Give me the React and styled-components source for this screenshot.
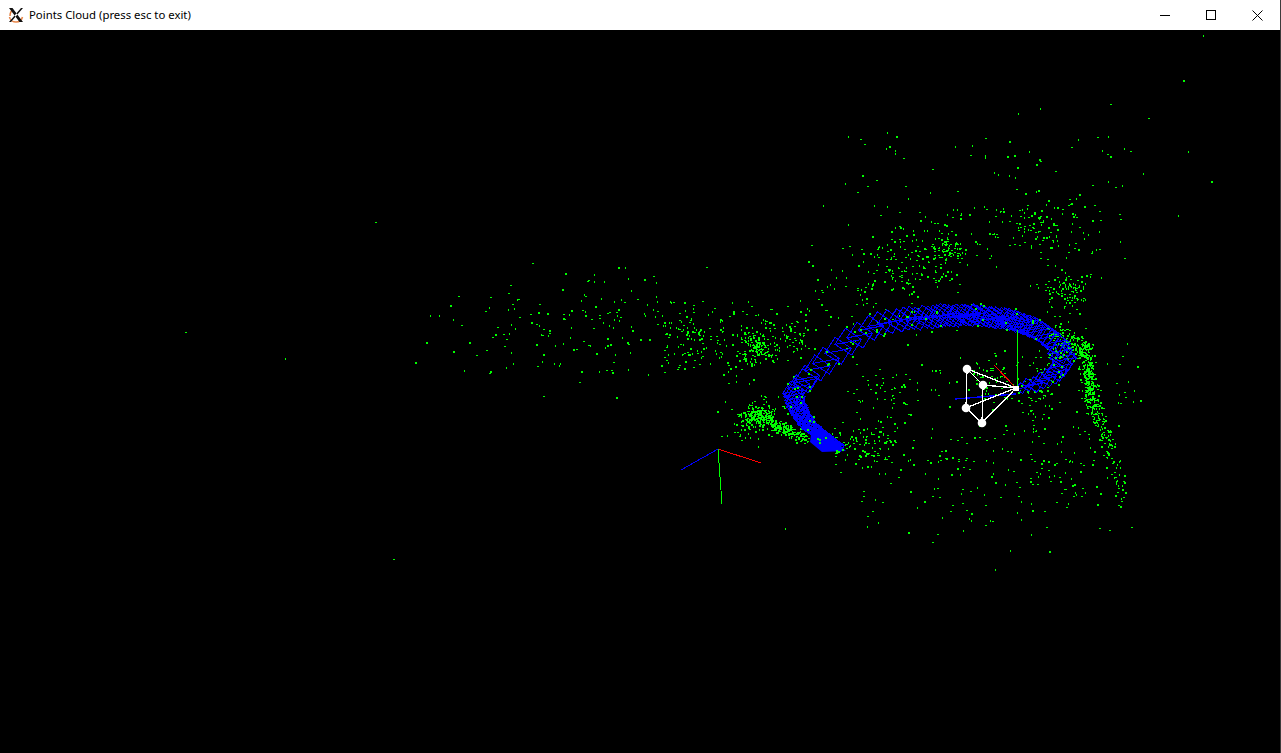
import React, { useMemo } from "react"
import styled, { createGlobalStyle } from "styled-components";

const GlobalStyle = createGlobalStyle`
    html, body { margin: 0; height: 100%; background: #000; overflow: hidden; }
`;

const Window = styled.div`
    display: flex;
    flex-direction: column;
    height: 100vh;
    border-right: 1px solid #3c3c3c;
    box-sizing: border-box;
`;

const TitleBar = styled.div`
    height: 30px;
    flex: none;
    display: flex;
    align-items: center;
    background: #fff;
    font-family: "Noto Sans", "Liberation Sans", sans-serif;
`;

const AppIcon = styled.svg`
    width: 16px;
    height: 16px;
    margin-left: 8px;
    flex: none;
`;

const Title = styled.div`
    flex: 1;
    margin-left: 5px;
    padding-bottom: 1px;
    font-size: 11.35px;
    color: #000;
    white-space: nowrap;
`;

const ControlButton = styled.div`
    width: 46px;
    height: 30px;
    display: flex;
    align-items: center;
    justify-content: center;
`;

const Scene = styled.svg`
    flex: 1;
    min-height: 0;
    display: block;
    width: 100%;
    background: #000;
`;

// small seeded generator so the cloud comes out the same on every load
function makeRandom(seed) {
    let s = seed
    return () => {
        s = (s + 0x6d2b79f5) | 0
        let t = Math.imul(s ^ (s >>> 15), 1 | s)
        t = (t + Math.imul(t ^ (t >>> 7), 61 | t)) ^ t
        return ((t ^ (t >>> 14)) >>> 0) / 4294967296
    }
}

// [cx, cy, sx, sy, count]
const BLOBS = [
    [945, 250, 9, 8, 60],
    [945, 250, 26, 22, 70],
    [1040, 225, 28, 14, 100],
    [1068, 292, 11, 12, 90],
    [1062, 265, 25, 30, 30],
    [900, 262, 22, 20, 100],
    [880, 300, 45, 22, 45],
    [757, 347, 5, 5, 50],
    [757, 347, 13, 10, 90],
    [795, 335, 7, 10, 40],
    [690, 335, 17, 15, 90],
    [735, 345, 36, 24, 110],
    [530, 325, 48, 24, 50],
    [615, 320, 32, 28, 50],
    [840, 285, 20, 30, 35],
    [755, 415, 8, 5, 140],
    [757, 420, 15, 10, 80],
    [868, 443, 20, 13, 110],
    [900, 392, 26, 13, 60],
    [1050, 465, 22, 28, 30],
    [985, 378, 16, 14, 60],
    [1035, 392, 14, 18, 60],
    [1122, 375, 10, 22, 14],
]

// even scatter: [x, y, width, height, count]
const SCATTERS = [
    [840, 130, 310, 130, 95],
    [860, 450, 270, 85, 125],
    [930, 425, 190, 40, 40],
    [480, 295, 200, 80, 40],
]

// dense streaks of points: [x1, y1, x2, y2, spread, count]
const STREAKS = [
    [768, 420, 805, 438, 3, 170],
    [1050, 332, 1085, 348, 5, 130],
    [1085, 345, 1092, 405, 4, 240],
    [1090, 400, 1108, 440, 4, 90],
    [1105, 440, 1122, 498, 4, 35],
    [1040, 360, 1070, 345, 7, 50],
]

const LONERS = [
    [375, 222], [185, 332], [285, 358], [415, 362], [393, 559], [1203, 35], [1183, 80],
    [1211, 181], [1178, 215], [1188, 151], [1148, 118], [1040, 108], [1018, 113], [1110, 104],
    [995, 569], [1010, 550], [932, 542], [785, 528], [706, 267], [628, 278], [565, 273],
    [532, 263], [458, 296], [453, 351], [464, 370], [845, 183], [1131, 527], [1140, 400],
]

// control points of the camera path: [x, y, frame size, spacing]
const TRACK = [
    [840, 447, 5, 1.6], [822, 436, 7, 1.8], [806, 422, 9, 2.5], [796, 405, 10, 3.5],
    [794, 392, 11, 8], [808, 378, 13, 13], [826, 360, 14, 15], [848, 342, 14, 13],
    [872, 327, 13, 9], [900, 320, 12, 6], [935, 316, 12, 4], [975, 315, 11, 4],
    [1012, 320, 12, 5], [1040, 330, 13, 6], [1058, 345, 13, 6], [1064, 360, 13, 7],
    [1054, 375, 10, 7], [1035, 384, 8, 7], [1018, 388, 5, 4],
]

function buildGreen() {
    const rnd = makeRandom(4127)
    const gauss = () => (rnd() + rnd() + rnd() + rnd() - 2) * 1.73
    const shapes = [[2, 1], [1, 2], [2, 2], [2, 1], [1, 2]]
    let d = ""
    const put = (x, y) => {
        const [w, h] = shapes[Math.floor(rnd() * shapes.length)]
        d += `M${Math.round(x)} ${Math.round(y)}h${w}v${h}h${-w}z`
    }
    BLOBS.forEach(([cx, cy, sx, sy, n]) => {
        for (let i = 0; i < n; i++) put(cx + gauss() * sx, cy + gauss() * sy)
    })
    SCATTERS.forEach(([x, y, w, h, n]) => {
        for (let i = 0; i < n; i++) put(x + rnd() * w, y + rnd() * h)
    })
    STREAKS.forEach(([x1, y1, x2, y2, spread, n]) => {
        for (let i = 0; i < n; i++) {
            const t = rnd()
            put(x1 + (x2 - x1) * t + gauss() * spread, y1 + (y2 - y1) * t + gauss() * spread)
        }
    })
    LONERS.forEach(([x, y]) => put(x, y))
    return d
}

function buildFrames() {
    const rnd = makeRandom(77)
    let d = ""
    for (let i = 0; i < TRACK.length - 1; i++) {
        const [x1, y1, s1, step1] = TRACK[i]
        const [x2, y2, s2] = TRACK[i + 1]
        const len = Math.hypot(x2 - x1, y2 - y1)
        for (let l = 0; l < len; l += step1) {
            const t = l / len
            const x = x1 + (x2 - x1) * t + (rnd() - 0.5) * 2
            const y = y1 + (y2 - y1) * t + (rnd() - 0.5) * 2
            const s = s1 + (s2 - s1) * t
            // quad of the frustum, leaning away from the apex, with its ribs
            const a = [x - s * 0.2, y - s * 0.95]
            const b = [x + s * 0.95, y - s * 0.15]
            const c = [x + s * 0.25, y + s * 0.95]
            const e = [x - s * 0.95, y + s * 0.2]
            d += `M${a}L${b}L${c}L${e}Z`
            d += `M${e}L${b}`
        }
    }
    return d
}

function buildSpecks() {
    const rnd = makeRandom(9)
    let d = ""
    TRACK.forEach(([x, y, s]) => {
        for (let i = 0; i < 4; i++) {
            d += `M${Math.round(x + (rnd() - 0.5) * s * 2)} ${Math.round(y + (rnd() - 0.5) * s * 2)}h2v2h-2z`
        }
    })
    return d
}

const CORNERS = [[967, 369], [983, 385], [966, 408], [982, 423]]

function CurrentCamera() {
    return (
        <g shapeRendering="crispEdges" fill="none">
            <path d="M1017 330V388" stroke="#00ff00" />
            <path d="M994 365L1016 388" stroke="#ff0000" />
            <path d="M955 399L1016 394" stroke="#0000ff" strokeWidth="1.4" />
            <path
                d="M967 369L1016 388M983 385L1016 388M966 408L1016 388M982 423L1016 388M967 369L966 408M983 385L982 423M967 369L983 385M966 408L982 423"
                stroke="#fff"
                strokeWidth="1.3"
            />
            {CORNERS.map(([x, y]) => <circle key={x + y} cx={x} cy={y} r="4.3" fill="#fff" shapeRendering="auto" />)}
            <rect x="1014" y="386" width="5" height="5" fill="#fff" />
        </g>
    )
}

function OriginAxes() {
    return (
        <g fill="none" shapeRendering="crispEdges">
            <path d="M718 449L761 463" stroke="#ff0000" />
            <path d="M718 449L681 470" stroke="#0000ff" />
            <path d="M718 449L722 504" stroke="#00ff00" />
        </g>
    )
}

export default function App() {
    const green = useMemo(buildGreen, [])
    const frames = useMemo(buildFrames, [])
    const specks = useMemo(buildSpecks, [])

    return (
        <Window>
            <GlobalStyle />
            <TitleBar>
                <AppIcon viewBox="0 0 16 16">
                    <path d="M1.5 10c.5 3.5 4 5 6.500 5s5.500-1.500 6.500-5" stroke="#e8864a" strokeWidth="1.6" fill="none" />
                    <path d="M2 9c0-3 1-5 3-6" stroke="#e07a3a" strokeWidth="1.4" fill="none" />
                    <path d="M1 1h3.500L15 15h-3.500zM15 1h-2L1 15h2z" fill="#111" />
                </AppIcon>
                <Title>Points Cloud (press esc to exit)</Title>
                <ControlButton>
                    <svg width="10" height="10" viewBox="0 0 10 10"><path d="M0 5.500h10" stroke="#000" /></svg>
                </ControlButton>
                <ControlButton>
                    <svg width="10" height="10" viewBox="0 0 10 10"><rect x=".5" y=".5" width="9" height="9" stroke="#000" fill="none" /></svg>
                </ControlButton>
                <ControlButton>
                    <svg width="11" height="11" viewBox="0 0 11 11"><path d="M.5 .5l10 10M10.500 .5l-10 10" stroke="#000" fill="none" /></svg>
                </ControlButton>
            </TitleBar>
            <Scene viewBox="0 30 1280 723" preserveAspectRatio="xMinYMin slice">
                <path d={green} fill="#00ff00" shapeRendering="crispEdges" />
                <path d={frames} stroke="#0000ff" strokeWidth="1" fill="none" shapeRendering="crispEdges" />
                <path d="M812 428L824 430L846 451L822 452L810 442Z" fill="#0000ff" />
                <path d={specks} fill="#00ff00" shapeRendering="crispEdges" />
                <OriginAxes />
                <CurrentCamera />
            </Scene>
        </Window>
    )
}
